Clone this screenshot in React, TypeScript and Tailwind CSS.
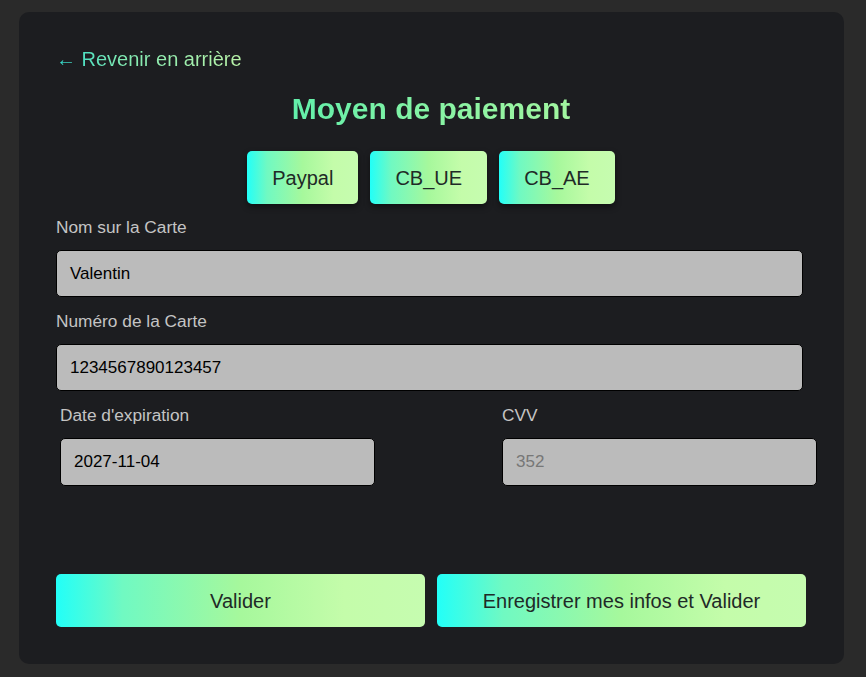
import React from "react";

const grad =
  "bg-[linear-gradient(90deg,#22fff8_0%,#70f9c2_18%,#a6f89c_50%,#c4fcaa_78%,#c6fcb0_100%)]";

export default function App() {
  return (
    <div className="min-h-screen bg-[#2a2a2a] pt-[12px] pl-[19px] font-['Liberation_Sans',Arial,sans-serif]">
      <div className="w-[825px] h-[652px] rounded-[10px] bg-[#1c1d20] pl-[37px] pt-[36px]">
        <div className="leading-[23px] text-[20px]">
          <span className="bg-[linear-gradient(90deg,#2fd9cc_0%,#7fe9b2_35%,#b9f3a8_100%)] bg-clip-text text-transparent">
            ← Revenir en arrière
          </span>
        </div>
        <div className="w-[750px] mt-[21px] flex justify-center">
          <h1 className="text-[30px] leading-[34px] font-bold bg-[linear-gradient(90deg,#62efaa_0%,#86f3a4_50%,#a2f6a0_100%)] bg-clip-text text-transparent">
            Moyen de paiement
          </h1>
        </div>
        <div className="w-[750px] mt-[25px] flex justify-center gap-[12px]">
          {["Paypal", "CB_UE", "CB_AE"].map((t) => (
            <button
              key={t}
              className={`${grad} h-[53px] px-[25px] rounded-[5px] text-[20px] text-[#1f2a27] shadow-[0_3px_6px_rgba(0,0,0,0.45)]`}
            >
              {t}
            </button>
          ))}
        </div>

        <div className="mt-[13px] text-[17.3px] leading-[20px] text-[#c4c4c4]">Nom sur la Carte</div>
        <div className="mt-[13px] w-[747px] h-[47px] rounded-[5px] border border-black bg-[#bbbbbb] pl-[13px] flex items-center text-[17px] text-black">
          Valentin
        </div>

        <div className="mt-[14px] text-[17.3px] leading-[20px] text-[#c4c4c4]">Numéro de la Carte</div>
        <div className="mt-[13px] w-[747px] h-[47px] rounded-[5px] border border-black bg-[#bbbbbb] pl-[13px] flex items-center text-[17px] text-black">
          1234567890123457
        </div>

        <div className="mt-[14px] flex gap-[127px] pl-[4px]">
          <div className="flex flex-col">
            <div className="text-[17.3px] leading-[20px] text-[#c4c4c4]">Date d'expiration</div>
            <div className="mt-[13px] w-[315px] h-[48px] rounded-[5px] border border-black bg-[#bbbbbb] pl-[13px] flex items-center text-[17px] text-black">
              2027-11-04
            </div>
          </div>
          <div className="flex flex-col">
            <div className="text-[17.3px] leading-[20px] text-[#c4c4c4]">CVV</div>
            <div className="mt-[13px] w-[315px] h-[48px] rounded-[5px] border border-black bg-[#bbbbbb] pl-[13px] flex items-center text-[17px] text-[#777777]">
              352
            </div>
          </div>
        </div>

        <div className="mt-[88px] flex gap-[12px]">
          <button className={`${grad} w-[369px] h-[53px] rounded-[5px] text-[20px] text-[#1f2a27]`}>
            Valider
          </button>
          <button className={`${grad} w-[369px] h-[53px] rounded-[5px] text-[20px] text-[#1f2a27]`}>
            Enregistrer mes infos et Valider
          </button>
        </div>
      </div>
    </div>
  );
}
